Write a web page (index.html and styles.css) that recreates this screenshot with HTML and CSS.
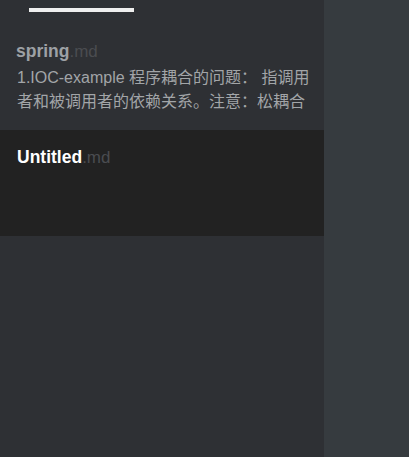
FILE: index.html
```html
<!DOCTYPE html>
<html>
<head>
<meta charset="utf-8">
<link rel="stylesheet" href="styles.css">
</head>
<body>
<div class="app">
  <aside class="sidebar">
    <div class="tabbar"><div class="tab-indicator"></div></div>
    <div class="file-item">
      <div class="file-title"><span class="name">spring</span><span class="ext">.md</span></div>
      <div class="file-excerpt">1.IOC-example 程序耦合的问题： 指调用者和被调用者的依赖关系。注意：松耦合</div>
    </div>
    <div class="file-item active">
      <div class="file-title"><span class="name">Untitled</span><span class="ext">.md</span></div>
    </div>
  </aside>
  <main class="editor"></main>
</div>
</body>
</html>
```
FILE: styles.css
```css
html, body {
  margin: 0;
  padding: 0;
  height: 100%;
}
body {
  font-family: "Liberation Sans", Arial, "Noto Sans CJK SC", sans-serif;
}
.app {
  display: flex;
  height: 457px;
}
.sidebar {
  width: 324px;
  flex: none;
  background: #2e3034;
  overflow: hidden;
}
.editor {
  flex: 1;
  background: #363b3f;
}
.tabbar {
  height: 23px;
  padding-top: 8px;
  box-sizing: border-box;
}
.tab-indicator {
  margin-left: 29px;
  width: 105px;
  height: 4px;
  background: #eeeeee;
}
.file-item {
  padding: 16px 8px 14px 16px;
  height: 107px;
  box-sizing: border-box;
}
.file-item.active {
  background: #222222;
  height: 106px;
  padding-left: 17px;
  padding-top: 15px;
}
.file-title {
  font-size: 17.5px;
  line-height: 24px;
}
.name {
  font-weight: bold;
  color: #9da1a5;
}
.active .name {
  color: #ffffff;
}
.ext {
  color: #4a4c50;
  font-size: 17px;
}
.file-excerpt {
  margin-top: 2px;
  font-size: 16px;
  line-height: 24px;
  color: #a2a5a8;
  height: 48px;
  overflow: hidden;
  margin-left: 1px;
}
```
